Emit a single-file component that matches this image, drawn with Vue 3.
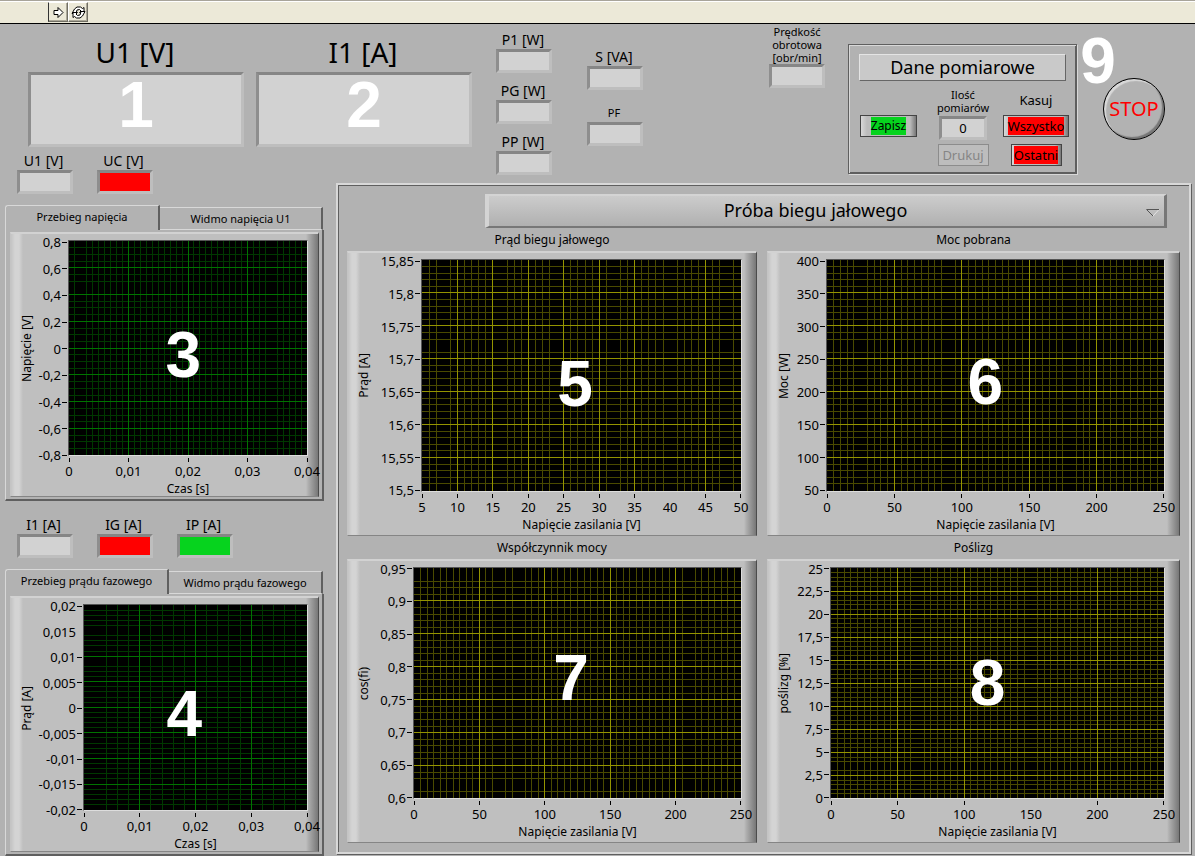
<script setup>
import { h, ref } from 'vue'

const test = ref('Próba biegu jałowego')

const scopes = [
  {
    id: 'u1', label: 'U1 [V]', grow: 271,
    meters: [{ id: 'm-u1', label: 'U1 [V]', tone: 'plain' }, { id: 'm-uc', label: 'UC [V]', tone: 'red' }],
    tabs: ['Przebieg napięcia', 'Widmo napięcia U1'], firstTab: 155,
    chart: {
      tone: 'green', gutter: 57, yTitle: 'Napięcie [V]', xTitle: 'Czas [s]', tag: '3', tagX: 48, tagY: 53,
      y: ['0,8', '0,6', '0,4', '0,2', '0', '-0,2', '-0,4', '-0,6', '-0,8'], yMinor: 4, ySkip: [7],
      x: ['0', '0,01', '0,02', '0,03', '0,04'], xMinor: 10, xSkip: [2, 34]
    }
  },
  {
    id: 'i1', label: 'I1 [A]', grow: 261,
    meters: [{ id: 'm-i1', label: 'I1 [A]', tone: 'plain' }, { id: 'm-ig', label: 'IG [A]', tone: 'red' }, { id: 'm-ip', label: 'IP [A]', tone: 'lime' }],
    tabs: ['Przebieg prądu fazowego', 'Widmo prądu fazowego'], firstTab: 164,
    chart: {
      tone: 'green', gutter: 72, yTitle: 'Prąd [A]', xTitle: 'Czas [s]', tag: '4', tagX: 45, tagY: 53,
      y: ['0,02', '0,015', '0,01', '0,005', '0', '-0,005', '-0,01', '-0,015', '-0,02'], yMinor: 5, ySkip: [5, 11],
      x: ['0', '0,01', '0,02', '0,03', '0,04'], xMinor: 5, xSkip: [1]
    }
  }
]

const volts = ['0', '50', '100', '150', '200', '250']
const results = [
  {
    title: 'Prąd biegu jałowego', tone: 'yellow', gutter: 73, yTitle: 'Prąd [A]', xTitle: 'Napięcie zasilania [V]', tag: '5', tagX: 48, tagY: 54,
    y: ['15,85', '15,8', '15,75', '15,7', '15,65', '15,6', '15,55', '15,5'], yMinor: 5, ySkip: [13],
    x: ['5', '10', '15', '20', '25', '30', '35', '40', '45', '50'], xMinor: 5, xSkip: [3, 11, 19, 27, 35, 43]
  },
  {
    title: 'Moc pobrana', tone: 'yellow', gutter: 58, yTitle: 'Moc [W]', xTitle: 'Napięcie zasilania [V]', tag: '6', tagX: 47, tagY: 53,
    y: ['400', '350', '300', '250', '200', '150', '100', '50'], yMinor: 5, ySkip: [13],
    x: volts, xMinor: 10, xSkip: [5, 18, 36]
  },
  {
    title: 'Współczynnik mocy', tone: 'yellow', gutter: 65, yTitle: 'cos(fi)', xTitle: 'Napięcie zasilania [V]', tag: '7', tagX: 48, tagY: 48,
    y: ['0,95', '0,9', '0,85', '0,8', '0,75', '0,7', '0,65', '0,6'], yMinor: 5, ySkip: [1, 33],
    x: volts, xMinor: 10, xSkip: [13, 16, 42]
  },
  {
    title: 'Poślizg', tone: 'yellow', gutter: 62, yTitle: 'poślizg [%]', xTitle: 'Napięcie zasilania [V]', tag: '8', tagX: 47, tagY: 50,
    y: ['25', '22,5', '20', '17,5', '15', '12,5', '10', '7,5', '5', '2,5', '0'], yMinor: 5, ySkip: [43],
    x: volts, xMinor: 10, xSkip: [13, 30]
  }
]

function gridLines(axis, labels, minor, skip) {
  const count = (labels.length - 1) * minor
  const lines = []
  for (let k = 1; k < count; k++) {
    if (skip.includes(k)) continue
    const at = (k / count) * 100 + '%'
    const ends = axis === 'x' ? { x1: at, x2: at, y1: '0', y2: '100%' } : { y1: at, y2: at, x1: '0', x2: '100%' }
    lines.push({ major: k % minor === 0, node: h('line', { ...ends, class: k % minor === 0 ? 'major' : 'minor' }) })
  }
  return lines
}

function tickMarks(labels, minor, skip) {
  return labels.map((text, i) => h('span', { class: ['mark', { bare: skip.includes(i * minor) }] }, [h('span', text)]))
}

const Chart = ({ spec }) => {
  const lines = [...gridLines('x', spec.x, spec.xMinor, spec.xSkip), ...gridLines('y', spec.y, spec.yMinor, spec.ySkip)]
  lines.sort((a, b) => a.major - b.major)
  return h('figure', { class: ['chart', spec.tone] }, [
    h('div', { class: 'y-axis', style: { width: spec.gutter + 'px' } }, [
      h('span', { class: 'y-title' }, spec.yTitle),
      h('div', { class: 'y-marks' }, tickMarks(spec.y, spec.yMinor, spec.ySkip))
    ]),
    h('div', { class: 'plot' }, [
      h('svg', { 'aria-hidden': 'true' }, lines.map((l) => l.node)),
      h('span', { class: 'tag', style: { left: spec.tagX + '%', top: spec.tagY + '%' } }, spec.tag)
    ]),
    h('div', { class: 'x-axis' }, [
      h('div', { class: 'x-marks' }, tickMarks(spec.x, spec.xMinor, spec.xSkip)),
      h('span', { class: 'x-title' }, spec.xTitle)
    ])
  ])
}
Chart.props = ['spec']
</script>

<template>
  <div class="page">
    <header class="toolbar">
      <button class="tool" aria-label="Uruchom">
        <svg width="13" height="13" viewBox="0 0 13 13"><path d="M2 4.5h4v-3l5 5-5 5v-3H2z" fill="#fff" stroke="#000" /></svg>
      </button>
      <button class="tool" aria-label="Uruchom ciągle">
        <svg width="15" height="13" viewBox="0 0 15 13">
          <path d="M1 7.500 3.500 3 6 1h3.500l2 1.500L13 1.500v5H8.500L10 5 8.500 3.500 6 4 5 7.500z" fill="#fff" stroke="#000" />
          <path d="M14 5.500 11.500 10 9 12H5.500L3.500 10.500 2 11.500v-5h4.500L5 8l1.500 1.500L9 9l1-3.500z" fill="#fff" stroke="#000" />
        </svg>
      </button>
    </header>

    <main class="board">
      <section class="displays">
        <div v-for="(s, i) in scopes" :key="s.id" class="display">
          <label :for="s.id">{{ s.label }}</label>
          <div class="screen">
            <input :id="s.id" readonly>
            <span class="tag">{{ i + 1 }}</span>
          </div>
        </div>
      </section>

      <section class="powers">
        <div class="stack">
          <div class="meter"><label for="p1">P1 [W]</label><input id="p1" readonly></div>
          <div class="meter"><label for="pg">PG [W]</label><input id="pg" readonly></div>
          <div class="meter"><label for="pp">PP [W]</label><input id="pp" readonly></div>
        </div>
        <div class="stack loose">
          <div class="meter"><label for="s">S [VA]</label><input id="s" readonly></div>
          <div class="meter"><label for="pf" class="fine">PF</label><input id="pf" readonly></div>
        </div>
        <div class="meter speed"><label for="rpm" class="fine">Prędkość<br>obrotowa<br>[obr/min]</label><input id="rpm" readonly></div>

        <div class="data">
          <h2>Dane pomiarowe</h2>
          <div class="controls">
            <button class="key save"><span>Zapisz</span></button>
            <div class="count">
              <label for="count" class="fine">Ilość<br>pomiarów</label>
              <input id="count" value="0" readonly>
              <button class="key print" disabled>Drukuj</button>
            </div>
            <div class="erase">
              <p>Kasuj</p>
              <button class="key all"><span>Wszystko</span></button>
              <button class="key last"><span>Ostatni</span></button>
            </div>
          </div>
        </div>

        <div class="halt">
          <button class="stop">STOP</button>
          <span class="tag nine">9</span>
        </div>
      </section>

      <section class="scopes">
        <template v-for="s in scopes" :key="s.id">
          <div class="meters">
            <div v-for="m in s.meters" :key="m.id" class="meter">
              <label :for="m.id">{{ m.label }}</label>
              <input :id="m.id" :class="m.tone" readonly>
            </div>
          </div>
          <div class="tabs" role="tablist">
            <button class="tab open" role="tab" aria-selected="true" :style="{ width: s.firstTab + 'px' }">{{ s.tabs[0] }}</button>
            <button class="tab" role="tab" aria-selected="false">{{ s.tabs[1] }}</button>
          </div>
          <div class="tab-panel" :style="{ flexGrow: s.grow }">
            <Chart :spec="s.chart" />
          </div>
        </template>
      </section>

      <section class="results">
        <div class="picker">
          <select v-model="test" aria-label="Rodzaj próby">
            <option>Próba biegu jałowego</option>
          </select>
          <svg width="14" height="8" viewBox="0 0 14 8"><path d="M0 .5h13L7 7" fill="none" stroke="#e6e6e6" /><path d="M13 .5H.5L7 7" fill="none" stroke="#555" /></svg>
        </div>
        <div class="result-grid">
          <div v-for="r in results" :key="r.title" class="result">
            <h3>{{ r.title }}</h3>
            <Chart :spec="r" />
          </div>
        </div>
      </section>
    </main>
  </div>
</template>

<style scoped>
.page {
  box-sizing: border-box;
  min-height: 100vh;
  display: flex;
  flex-direction: column;
  background: #b2b2b2;
  color: #000;
  font: 14px/18px "Noto Sans", sans-serif;
}
.page *, .page :deep(*) { box-sizing: border-box; }
h2, h3, p { margin: 0; font-weight: 400; }
button, input, select { font: inherit; color: inherit; }
button { padding: 0; }

.toolbar {
  flex: none;
  display: flex;
  height: 24px;
  padding: 1px 0 0 48px;
  background: #ece9d8;
  border-top: 1px solid #a8a49a;
  border-bottom: 1px solid #000;
  box-shadow: inset 0 1px #fff;
}
.tool {
  width: 20px;
  height: 20px;
  border: 1px solid;
  border-color: #fff #716f64 #716f64 #fff;
  background: #ece9d8;
  box-shadow: inset -1px -1px #aca899;
}
.tool:first-child { border-left: 1px solid #333; }
.tool svg { display: block; margin: auto; }

.board {
  flex: 1;
  display: grid;
  grid-template: 126px 33px 1fr / 331px 149px 1fr;
}
.displays { grid-area: 1 / 1 / 2 / 3; display: flex; gap: 12px; padding: 8px 8px 0 28px; }
.display { flex: 1; display: flex; flex-direction: column; text-align: center; font-size: 28px; line-height: 40px; }
.display label { padding-right: 2px; }
.screen { position: relative; display: flex; height: 75px; }
input {
  display: block;
  width: 56px;
  height: 24px;
  margin: 0;
  padding: 0;
  text-align: center;
  border: 3px solid;
  border-color: #868686 #bebebe #bebebe #8e8e8e;
  border-radius: 0;
  background: #d2d2d2;
  outline: none;
}
.screen input { width: 100%; height: 100%; }
.red { background: #f00; }
.lime { background: #06d31e; }
.page :deep(.tag), .tag {
  position: absolute;
  left: 50%;
  top: 44%;
  transform: translate(-50%, -50%);
  color: #fff;
  font: 700 64px/64px "Liberation Sans", Arial, sans-serif;
}

.powers { grid-area: 1 / 3 / 3 / 4; display: flex; align-items: flex-start; padding-left: 16px; }
.stack { display: flex; flex-direction: column; gap: 9px; margin: 7px 35px 0 0; }
.loose { gap: 14px; margin: 24px 126px 0 0; }
.meter { display: flex; flex-direction: column; align-items: center; }
.stack label { padding-right: 2px; }
.fine { font-size: 11px; text-align: center; }
.speed .fine { line-height: 13px; }
.speed { width: 56px; white-space: nowrap; padding-top: 1px; }
.data {
  width: 229px;
  margin: 20px 0 0 23px;
  padding: 9px 7px 7px 9px;
  border: 1px solid #5f5f5f;
  box-shadow: inset 1px 1px #d8d8d8, inset -1px -1px #5f5f5f, 1px 1px #d8d8d8;
}
.data h2 {
  margin: 0 3px 0 1px;
  border: 1px solid;
  border-color: #e4e4e4 #666 #666 #e4e4e4;
  background: #c9c9c9;
  text-align: center;
  font-size: 18px;
  line-height: 25px;
}
.controls { display: flex; align-items: flex-start; justify-content: space-between; padding: 7px 0 0 2px; }
.key {
  display: flex;
  align-items: center;
  justify-content: center;
  height: 22px;
  padding: 1px;
  border: 1px solid #444;
  background: linear-gradient(90deg, #d8d8d8, #bcbcbc 6px calc(100% - 6px), #777);
  font-size: 13px;
  line-height: 18px;
}
.key span { background: #f00; }
.save { width: 57px; margin-top: 27px; }
.key.save { font-size: 12px; }
.save span { background: #06d31e; }
.count, .erase { display: flex; flex-direction: column; align-items: center; }
.count { margin-left: 6px; }
.count .fine { line-height: 13px; margin-bottom: 2px; }
.count input { width: 48px; font-size: 13px; line-height: 18px; }
.print { width: 51px; margin-top: 4px; color: #858585; border-color: #8c8c8c; background: #bdbdbd; }
.erase p { font-size: 13px; margin: 3px 0 6px; }
.all { width: 66px; }
.last { width: 51px; margin-top: 7px; }
.halt { position: relative; margin: 54px 0 0 26px; }
.stop {
  width: 62px;
  height: 62px;
  border: 1px solid #000;
  border-radius: 50%;
  background: transparent;
  box-shadow: inset 2px 2px 1px #d9d9d9, inset -2px -2px 1px #777;
  color: #f00;
  font-size: 20px;
}
.tag.nine { left: -5px; top: -17px; }

.scopes { grid-area: 2 / 1 / 4 / 2; display: flex; flex-direction: column; padding: 2px 7px 0 5px; }
.meters { display: flex; gap: 24px; padding: 0 0 10px 12px; height: 53px; }
.meters label { padding-right: 3px; }
.tab-panel + .meters { margin-top: 15px; }
.tabs { display: flex; align-items: flex-end; height: 25px; }
.tab {
  flex: 1;
  height: 23px;
  margin-right: 1px;
  border: solid;
  border-width: 1px 2px 1px 0;
  border-color: #d8d8d8 #5f5f5f #d8d8d8;
  background: #b2b2b2;
  font-size: 11px;
}
.tab.open { flex: none; height: 25px; margin: 0; padding-bottom: 3px; border-width: 1px 2px 0 1px; border-left-color: #d8d8d8; border-radius: 3px 0 0 0; }
.tab-panel {
  flex: 1 1 0;
  display: flex;
  padding: 2px 3px 2px 4px;
  border: solid;
  border-width: 0 2px 2px 1px;
  border-color: #5f5f5f #5f5f5f #5f5f5f #d8d8d8;
}

.results {
  grid-area: 3 / 2 / 4 / 4;
  display: flex;
  flex-direction: column;
  margin: 0 4px 2px 5px;
  padding: 9px;
  border: 2px solid #d8d8d8;
  box-shadow: inset 1px 1px #5f5f5f, 1px 1px #5f5f5f;
}
.picker { position: relative; margin: 0 13px 0 138px; }
.picker select {
  appearance: none;
  display: block;
  width: 100%;
  height: 34px;
  padding: 0 22px 3px 0;
  border: solid;
  border-width: 2px 3px 2px 4px;
  border-color: #d4d4d4 #777 #777 #d4d4d4;
  border-radius: 0;
  background: linear-gradient(#ccc, #b0b0b0);
  font-size: 18px;
  line-height: 26px;
  text-align-last: center;
}
.picker svg { position: absolute; right: 7px; top: 15px; }
.result-grid { flex: 1; display: grid; grid-template-columns: 410fr 413fr; grid-auto-rows: 1fr; column-gap: 10px; }
.result { display: flex; flex-direction: column; }
h3 { text-align: center; font-size: 12px; line-height: 23px; }

.page :deep(.chart) {
  flex: 1;
  display: grid;
  grid-template: minmax(120px, 1fr) auto / auto 1fr;
  margin: 0;
  padding: 6px 10px 0 0;
  border: solid;
  border-width: 2px 1px 1px;
  border-color: #d2d2d2 #4c4c4c #858585 #c4c4c4;
  background: linear-gradient(90deg, #c4c4c4, #d4d4d4 4px 8px, #bfbfbf 12px calc(100% - 12px), #b0b0b0 calc(100% - 10px), #777);
}
.result :deep(.chart) { padding: 6px 14px 3px 0; }
.page :deep(.y-axis) { display: flex; align-items: center; justify-content: space-between; padding: 2px 1px 1px 8px; font-size: 13px; }
.page :deep(.y-title) { writing-mode: vertical-rl; transform: rotate(180deg); font-size: 12px; line-height: 16px; white-space: nowrap; }
.page :deep(.y-marks) { align-self: stretch; display: flex; flex-direction: column; justify-content: space-between; }
.page :deep(.mark) { display: flex; align-items: center; justify-content: flex-end; gap: 1px; height: 0; }
.page :deep(.y-marks .mark::after) { content: ""; width: 5px; height: 1px; background: #000; }
.page :deep(.plot) { position: relative; background: #000; border: 1px solid; border-color: #555 #ddd #ddd #555; }
.page :deep(.plot svg) { display: block; position: absolute; width: 100%; height: 100%; }
.page :deep(line) { stroke-width: 1; shape-rendering: crispEdges; }
.page :deep(.green .major) { stroke: #007300; }
.page :deep(.green .minor) { stroke: #003800; }
.page :deep(.yellow .major) { stroke: #949400; }
.page :deep(.yellow .minor) { stroke: #4a4a00; }
.page :deep(.x-axis) { grid-column: 2; padding-top: 2px; text-align: center; }
.page :deep(.x-marks) { display: flex; justify-content: space-between; height: 24px; margin: 0 1px; font-size: 13px; line-height: 16px; }
.page :deep(.x-marks .mark) { flex-direction: column; justify-content: flex-start; width: 0; height: 21px; }
.page :deep(.x-marks .mark::before) { content: ""; flex: none; width: 1px; height: 4px; background: #000; }
.page :deep(.mark.bare::before), .page :deep(.mark.bare::after) { visibility: hidden; }
.page :deep(.x-title) { display: block; font-size: 12px; line-height: 14px; }
</style>

<style>
body { margin: 0; }
</style>
